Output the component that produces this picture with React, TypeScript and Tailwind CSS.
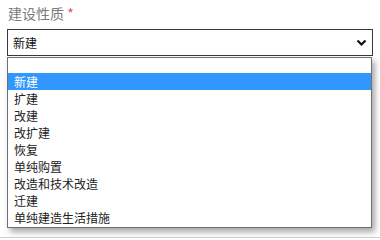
const OPTIONS = ['新建', '扩建', '改建', '改扩建', '恢复', '单纯购置', '改造和技术改造', '迁建', '单纯建造生活措施'];

export default function App() {
  const selected = '新建';
  return (
    <div className="relative w-[380px] h-[240px] overflow-hidden bg-white font-['Microsoft_YaHei','Noto_Sans_CJK_SC',sans-serif]">
      {/* label */}
      <div className="pl-2 pt-[3px] h-[29px] text-[14px] leading-[20px] text-[#7a7a7a]">
        建设性质 <span className="text-[#e5554b]">*</span>
      </div>

      {/* select */}
      <div className="mx-[7px] h-[27px] border border-[#3a3a3a] bg-white flex items-center pl-[5px] pr-[5px] text-[12px] leading-[16px] text-[#111]">
        <span>{selected}</span>
        <svg className="ml-auto" width="11" height="8" viewBox="0 0 11 8">
          <path d="M1.5 1.5 L5.5 5.5 L9.5 1.5" fill="none" stroke="#111" strokeWidth="2.2" />
        </svg>
      </div>

      {/* field underneath */}
      <div className="mt-[181px] border-t border-[#cfcfcf]" />

      {/* open dropdown list */}
      <div className="absolute left-[7px] top-[57px] w-[365px] h-[171px] border border-[#707070] bg-white shadow-[3px_4px_6px_rgba(0,0,0,0.35)] pb-[1px]">
        <div className="h-[15px]" />
        {OPTIONS.map(o => (
          <div
            key={o}
            className={`h-[17px] pl-[6px] text-[12px] leading-[17px] ${
              o === selected ? 'bg-[#3297fd] text-white' : 'text-[#222]'
            }`}
          >
            {o}
          </div>
        ))}
      </div>
    </div>
  );
}
